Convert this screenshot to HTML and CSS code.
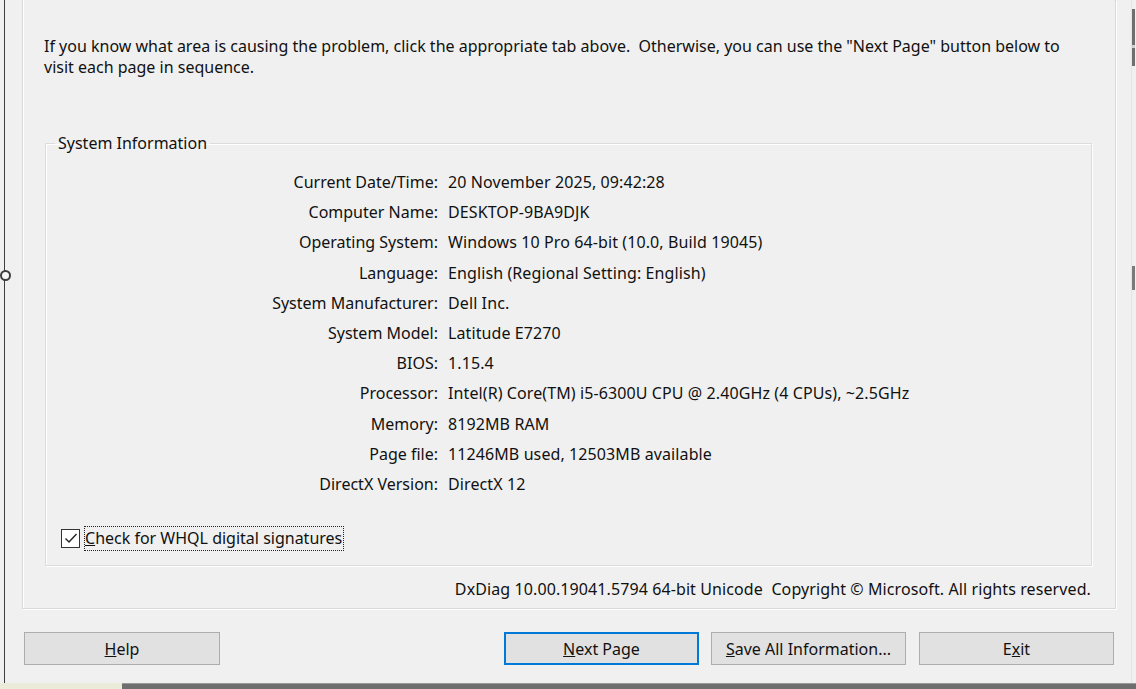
FILE: index.html
```html
<!DOCTYPE html>
<html lang="en">
<head>
    <meta charset="UTF-8">
    <title>DirectX Diagnostic Tool</title>
    <link rel="stylesheet" href="styles.css">
</head>
<body>
    <div class="window">
        <div class="frame">
            <div class="tab-page">
                <p class="intro">If you know what area is causing the problem, click the appropriate tab above.&nbsp; Otherwise, you can use the "Next Page" button below to visit each page in sequence.</p>

                <fieldset class="group">
                    <legend>System Information</legend>
                    <div class="info">
                        <span class="label">Current Date/Time:</span><span class="value">20 November 2025, 09:42:28</span>
                        <span class="label">Computer Name:</span><span class="value">DESKTOP-9BA9DJK</span>
                        <span class="label">Operating System:</span><span class="value">Windows 10 Pro 64-bit (10.0, Build 19045)</span>
                        <span class="label">Language:</span><span class="value">English (Regional Setting: English)</span>
                        <span class="label">System Manufacturer:</span><span class="value">Dell Inc.</span>
                        <span class="label">System Model:</span><span class="value">Latitude E7270</span>
                        <span class="label">BIOS:</span><span class="value">1.15.4</span>
                        <span class="label">Processor:</span><span class="value">Intel(R) Core(TM) i5-6300U CPU @ 2.40GHz (4 CPUs), ~2.5GHz</span>
                        <span class="label">Memory:</span><span class="value">8192MB RAM</span>
                        <span class="label">Page file:</span><span class="value">11246MB used, 12503MB available</span>
                        <span class="label">DirectX Version:</span><span class="value">DirectX 12</span>
                    </div>
                    <label class="check">
                        <span class="box">
                            <svg width="16" height="16" viewBox="0 0 16 16"><path d="M2.5 8.5 L6 12 L13.5 4" fill="none" stroke="#222" stroke-width="1.4"/></svg>
                        </span>
                        <span class="check-text"><u>C</u>heck for WHQL digital signatures</span>
                    </label>
                </fieldset>

                <div class="version">DxDiag 10.00.19041.5794 64-bit Unicode&nbsp; Copyright © Microsoft. All rights reserved.</div>
            </div>

            <div class="buttons">
                <button class="btn"><u>H</u>elp</button>
                <span class="spacer"></span>
                <button class="btn default"><u>N</u>ext Page</button>
                <button class="btn"><u>S</u>ave All Information...</button>
                <button class="btn">E<u>x</u>it</button>
            </div>
        </div>
        <div class="edge"></div>
        <span class="grip"></span>
    </div>
    <div class="taskbar">
        <span class="taskbar-left"></span>
        <span class="taskbar-right"></span>
    </div>
</body>
</html>
```

FILE: styles.css
```css
html, body {
    margin: 0;
    padding: 0;
}
body {
    background-color: #f0f0f0;
    font-family: "Noto Sans", sans-serif;
    font-size: 16px;
    color: #111;
    width: 1136px;
    height: 689px;
    overflow: hidden;
}
.window {
    position: relative;
    display: flex;
    height: 683px;
}
.frame {
    margin-left: 4px;
    width: 1128px;
    border-left: 1px solid #3e3e3e;
    display: flex;
    flex-direction: column;
}
.tab-page {
    margin-left: 17px;
    width: 1092px;
    height: 608px;
    border: 1px solid #d9d9d9;
    border-top: none;
    box-shadow: 1px 1px 0 #fff, inset 1px 0 0 #fff;
}
.intro {
    margin: 0 0 0 21px;
    padding-top: 36px;
    line-height: 21px;
    width: 1040px;
}
.group {
    margin: 55px 0 0 22px;
    width: 1047px;
    height: 433px;
    box-sizing: border-box;
    padding: 14px 0 0 0;
    border: 1px solid #dcdcdc;
    box-shadow: 1px 1px 0 #fff, inset 1px 1px 0 #fff;
}
.group legend {
    margin-left: 9px;
    padding: 0 3px 0 3px;
    line-height: 20px;
}
.info {
    display: grid;
    grid-template-columns: 392px 1fr;
    column-gap: 10px;
    grid-auto-rows: 30.2px;
    align-items: center;
}
.info .label {
    text-align: right;
}
.info .value {
    letter-spacing: 0.1px;
}
.check {
    display: flex;
    align-items: center;
    margin: 27px 0 0 15px;
    height: 24px;
}
.check .box {
    width: 17px;
    height: 17px;
    border: 1px solid #333;
    background: #fff;
    display: flex;
    align-items: center;
    justify-content: center;
}
.check-text {
    margin-left: 4px;
    padding: 0 1px 1px 0;
    border: 1px dotted #222;
}
.version {
    text-align: right;
    margin: 13px 24px 0 0;
    line-height: 20px;
    letter-spacing: 0.1px;
}
.buttons {
    display: flex;
    margin: 23px 0 0 19px;
    gap: 13px;
}
.spacer {
    flex: 1;
}
.btn {
    width: 195px;
    height: 33px;
    font-family: inherit;
    font-size: 16px;
    color: #111;
    background-color: #e1e1e1;
    border: 1px solid #adadad;
    padding: 0;
}
.btn.default {
    border: 2px solid #0078d7;
    margin-right: -1px;
}
.buttons .btn:first-child {
    width: 196px;
}
.buttons .btn:last-child {
    margin-right: 17px;
}
.edge {
    margin-left: auto;
    width: 3px;
    border-left: 1px solid #e4e4e4;
    margin-right: 1px;
    background: linear-gradient(#f0f0f0 0, #f0f0f0 9px, #6f6f6f 9px, #6f6f6f 45px, #d0d0d0 45px, #d0d0d0 48px, #6f6f6f 48px, #6f6f6f 66px, #f0f0f0 66px, #f0f0f0 266px, #7a7a7a 266px, #7a7a7a 290px, #f0f0f0 290px);
}
/* window resize grip over the left border */
.grip {
    position: absolute;
    left: 0;
    top: 270px;
    width: 7px;
    height: 7px;
    border: 2px solid #3e3e3e;
    border-radius: 50%;
    background: #f7f7f7;
}
.taskbar {
    display: flex;
    height: 6px;
}
.taskbar-left {
    width: 122px;
    background: #ebebd9;
}
.taskbar-right {
    flex: 1;
    background: #6e6e6e;
    border-top: 1px solid #9a9a9a;
}
```
